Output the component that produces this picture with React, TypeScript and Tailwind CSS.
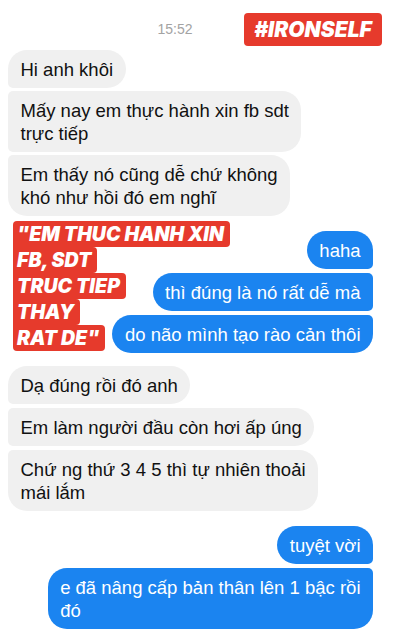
import React from 'react'

type Side = 'first' | 'middle' | 'last' | 'single'

const grayShape: Record<Side, string> = {
  first: 'rounded-[19px] rounded-bl-[5px]',
  middle: 'rounded-r-[19px] rounded-l-[5px]',
  last: 'rounded-[19px] rounded-tl-[5px]',
  single: 'rounded-[19px]',
}

const blueShape: Record<Side, string> = {
  first: 'rounded-[19px] rounded-br-[5px]',
  middle: 'rounded-l-[19px] rounded-r-[5px]',
  last: 'rounded-[19px] rounded-tr-[5px]',
  single: 'rounded-[19px]',
}

function Incoming({ pos, children }: { pos: Side; children: React.ReactNode }) {
  return (
    <div
      className={`w-fit whitespace-nowrap bg-[#f0f0f0] px-[12.5px] py-[7.5px] text-[18.5px] leading-[23px] text-[#111111] ${grayShape[pos]}`}
    >
      {children}
    </div>
  )
}

function Outgoing({ pos, children }: { pos: Side; children: React.ReactNode }) {
  return (
    <div
      className={`w-fit whitespace-nowrap bg-[#1b84f0] px-[12.5px] py-[7.5px] text-[18.5px] leading-[23px] text-white ${blueShape[pos]}`}
    >
      {children}
    </div>
  )
}

const quoteLines = ['"EM THUC HANH XIN', 'FB, SDT', 'TRUC TIEP', 'THAY', 'RAT DE"']

function Quote() {
  return (
    <div
      className="col-start-1 row-start-1 ml-[5px] flex flex-col self-start"
      style={{ fontFamily: 'Inter, "DejaVu Sans", sans-serif' }}
    >
      {quoteLines.map((line, i) => (
        <div
          key={line}
          className={`w-fit h-[26px] bg-[#e63a2c] pl-[4px] pr-[6px] text-[19.5px] leading-[26px] font-black italic text-white rounded-r-[4px] ${
            i === 0 ? 'rounded-tl-[4px]' : ''
          } ${i === quoteLines.length - 1 ? 'rounded-bl-[4px]' : ''}`}
        >
          {line}
        </div>
      ))}
    </div>
  )
}

export default function App() {
  return (
    <div
      className="w-[400px] h-[637px] overflow-hidden bg-white pl-2"
      style={{ fontFamily: '"Liberation Sans", Arial, sans-serif' }}
    >
      <div className="relative mt-[13px] flex h-[33px] items-center justify-center pr-[58px]">
        <span className="text-[14px] text-[#a3a3a3]">15:52</span>
        <div
          className="absolute right-[18px] top-0 flex h-[33px] w-[138px] items-center justify-center rounded-[4px] bg-[#e63a2c] text-[21px] font-black italic text-white"
          style={{ fontFamily: 'Inter, "DejaVu Sans", sans-serif' }}
        >
          #IRONSELF
        </div>
      </div>

      <div className="mt-[4px] flex flex-col gap-[3px]">
        <Incoming pos="first">Hi anh khôi</Incoming>
        <Incoming pos="middle">
          Mấy nay em thực hành xin fb sdt
          <br />
          trực tiếp
        </Incoming>
        <Incoming pos="last">
          Em thấy nó cũng dễ chứ không
          <br />
          khó như hồi đó em nghĩ
        </Incoming>
      </div>

      {/* quote card and the blue replies share one grid cell */}
      <div className="mt-[5px] grid">
        <Quote />
        <div className="col-start-1 row-start-1 flex flex-col items-end gap-[4px] pr-[27px] pt-[10px]">
          <Outgoing pos="first">haha</Outgoing>
          <Outgoing pos="middle">thì đúng là nó rất dễ mà</Outgoing>
          <Outgoing pos="last">do não mình tạo rào cản thôi</Outgoing>
        </div>
      </div>

      <div className="mt-[13px] flex flex-col gap-[4px]">
        <Incoming pos="first">Dạ đúng rồi đó anh</Incoming>
        <Incoming pos="middle">Em làm người đầu còn hơi ấp úng</Incoming>
        <Incoming pos="last">
          Chứ ng thứ 3 4 5 thì tự nhiên thoải
          <br />
          mái lắm
        </Incoming>
      </div>

      <div className="mt-[15px] flex flex-col items-end gap-[4px] pr-[27px]">
        <Outgoing pos="first">tuyệt vời</Outgoing>
        <Outgoing pos="last">
          e đã nâng cấp bản thân lên 1 bậc rồi
          <br />
          đó
        </Outgoing>
      </div>
    </div>
  )
}
